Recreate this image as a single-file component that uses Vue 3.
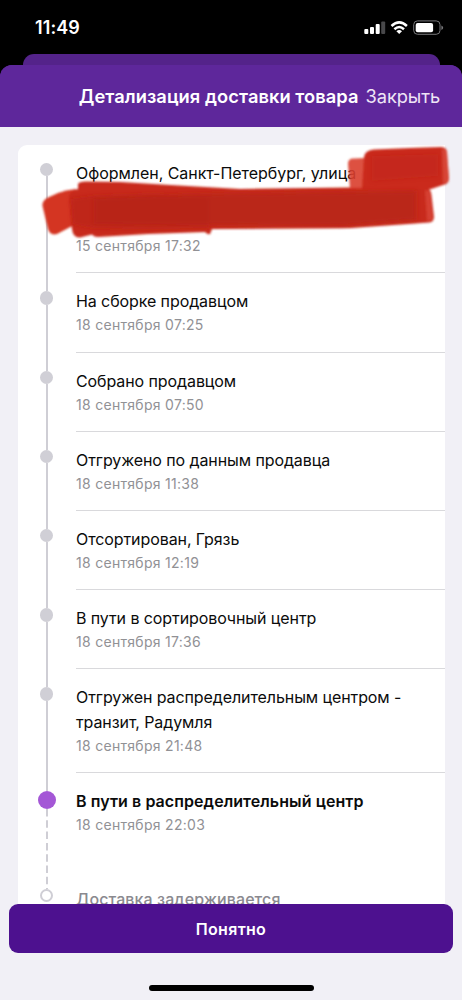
<script setup>
const steps = [
  { title: 'Оформлен, Санкт-Петербург, улица', date: '15 сентября 17:32', kind: 'address' },
  { title: 'На сборке продавцом', date: '18 сентября 07:25' },
  { title: 'Собрано продавцом', date: '18 сентября 07:50' },
  { title: 'Отгружено по данным продавца', date: '18 сентября 11:38' },
  { title: 'Отсортирован, Грязь', date: '18 сентября 12:19' },
  { title: 'В пути в сортировочный центр', date: '18 сентября 17:36' },
  { title: 'Отгружен распределительным центром - транзит, Радумля', date: '18 сентября 21:48' },
  { title: 'В пути в распределительный центр', date: '18 сентября 22:03', kind: 'current' },
  { title: 'Доставка задерживается', date: '', kind: 'next' },
]
</script>

<template>
  <div class="screen">
    <div class="status">
      <span class="time">11:49</span>
      <svg class="status-icons" width="82" height="18" viewBox="0 0 82 18">
        <g fill="#fff">
          <rect x="0.3" y="11" width="4" height="5" rx="1" />
          <rect x="6" y="9" width="4" height="7" rx="1" />
          <rect x="11.7" y="6" width="4" height="10" rx="1" />
          <rect x="17.2" y="3.4" width="4" height="12.6" rx="1" fill="#48484a" />
        </g>
        <g fill="none" stroke="#fff" stroke-width="2.5">
          <path d="M27.500 8Q35.200 0.800 42.900 8" />
          <path d="M30.400 11.200Q35.200 6.900 40 11.200" />
        </g>
        <path d="M32.400 13.200Q35.200 10.900 38 13.200L35.200 16Z" fill="#fff" />
        <rect x="49.700" y="2.900" width="26.300" height="13.400" rx="3.800" fill="none" stroke="#77777a" stroke-width="1" />
        <rect x="51.700" y="4.900" width="17.400" height="9.400" rx="2" fill="#fff" />
        <path d="M77.400 7.500Q79.200 8.200 79.200 9.700Q79.200 11.200 77.400 11.900Z" fill="#77777a" />
      </svg>
    </div>
    <div class="back-sheet"></div>
    <div class="sheet">
      <header class="head">
        <h1>Детализация доставки товара</h1>
        <span class="close">Закрыть</span>
      </header>
      <main class="body">
        <section class="card">
          <div v-for="(s, i) in steps" :key="i" class="step" :class="s.kind">
            <div class="rail">
              <span class="line before"></span>
              <span class="dot"></span>
              <svg v-if="s.kind === 'current'" class="dash" width="2" height="80" viewBox="0 0 2 80">
                <path d="M1 0V80" stroke="#cfced5" stroke-width="2" stroke-dasharray="7.5 3.8" />
              </svg>
              <span v-else class="line after"></span>
            </div>
            <div class="info">
              <div class="title">{{ s.title }}</div>
              <div class="date">{{ s.date }}</div>
            </div>
          </div>
          <svg class="marker" width="462" height="110" viewBox="0 140 462 110">
            <defs>
              <filter id="soft" x="-5%" y="-10%" width="110%" height="120%">
                <feGaussianBlur stdDeviation="0.8" />
              </filter>
              <filter id="softer" x="-5%" y="-20%" width="110%" height="140%">
                <feGaussianBlur stdDeviation="2" />
              </filter>
            </defs>
            <g filter="url(#soft)">
              <path d="M42.500 206Q42 201 47 198L58 193Q66 190 76 189V224L57 234Q50 236 48 229Z" fill="#d43523" />
              <path d="M69 197Q69 191 78 189V184Q79 181.500 86 181.500L120 182L170 185L240 189L350 187.500L427 188Q431 189 431.500 195L434 217Q434 222 429 222.500L350 228L212 229L210 234Q208 235 205 232L148 234L98 237Q94 237 92 234.500L80 237.500Q73 238 72 229Z" fill="#c8291b" />
              <path d="M425 190L430 191L433 220L427 221Z" fill="#df4f3f" opacity=".6" />
              <path d="M348 164Q348 158 354 158.500L366 158V189H350Z" fill="#d93d2b" opacity=".9" />
              <path d="M364 157Q365 150 374 149.500L410 148L441 147Q447 147 447 153L449 178Q449 184 443 185L431 189H362Z" fill="#ca2b1d" />
              <path d="M442 149L447 150L449 181L443 184Z" fill="#df5748" opacity=".6" />
            </g>
            <g filter="url(#softer)" fill="#b62417">
              <path d="M71 199L92 196L150 194L209 197V228L150 229L94 228L73 224Z" opacity=".5" />
              <path d="M94 198L200 194L416 191V220L340 226L94 224Z" opacity=".8" />
              <path d="M372 156L438 154V176L372 181Z" opacity=".25" />
            </g>
          </svg>
        </section>
      </main>
      <footer class="foot">
        <button class="ok">Понятно</button>
        <div class="home"></div>
      </footer>
    </div>
  </div>
</template>

<style>
html, body { margin: 0; background: #000; }
</style>

<style scoped>
.screen {
  width: 462px;
  height: 1000px;
  overflow: hidden;
  background: #000;
  display: flex;
  flex-direction: column;
  font-family: Inter, "Liberation Sans", sans-serif;
}
.status {
  height: 54px;
  flex: none;
  box-sizing: border-box;
  padding: 17px 16px 0 35px;
  display: flex;
  justify-content: space-between;
  align-items: flex-start;
}
.time { color: #fff; font-size: 18px; line-height: 22px; font-weight: 600; letter-spacing: 0.1px; }
.status-icons { margin: 1px 0 0; }
.back-sheet { height: 11px; flex: none; margin: 0 22.500px; background: #54238a; border-radius: 11px 11px 0 0; }
.sheet {
  flex: 1;
  min-height: 0;
  display: flex;
  flex-direction: column;
  border-radius: 12px 12px 0 0;
  overflow: hidden;
  background: linear-gradient(#5e279b 70px, #f1f0f6 70px);
}
.head {
  height: 62px;
  flex: none;
  display: flex;
  align-items: center;
  justify-content: flex-end;
  gap: 7px;
  box-sizing: border-box;
  padding: 0 22px 0 0;
  background: #5e279b;
  color: #fff;
  white-space: nowrap;
}
h1 { margin: 0; font-size: 18.300px; font-weight: 600; line-height: 24px; letter-spacing: 0.060px; }
.close { font-size: 18.300px; line-height: 24px; font-weight: 400; color: #eee5f6; letter-spacing: -0.100px; }
.body { flex: 1; min-height: 0; padding: 17.800px 17.500px 0; overflow: hidden; background: #f1f0f6; }
.card { position: relative; background: #fff; border-radius: 9px 0 0 0; height: 100%; }
.step { display: flex; height: 79.200px; }
.step:nth-child(1) { height: 128.600px; }
.step:nth-child(7) { height: 103.900px; }
.step.current { height: 97.300px; }
.rail { width: 58.500px; flex: none; display: flex; flex-direction: column; align-items: center; }
.line { width: 2px; background: #cfced5; }
.before { height: 18px; flex: none; }
.after { flex: 1; }
.dot { width: 13.400px; height: 13.400px; border-radius: 50%; background: #d0cfd6; flex: none; }
.address .before { background: none; }
.current .before { height: 17.600px; }
.current .dot { width: 18px; height: 18px; background: #a457d6; }
.dash { flex: none; display: block; }
.next .dot { box-sizing: border-box; border: 2px solid #cfced5; background: #fff; }
.next .line { background: none; }
.info { flex: 1; box-sizing: border-box; padding-top: 16px; border-bottom: 1px solid #d9d9dc; }
.current .info, .next .info { border-bottom: 0; }
.title { font-size: 16px; line-height: 24.600px; color: #0b0b0b; max-width: 350px; letter-spacing: -0.090px; }
.address .title { height: 73.800px; letter-spacing: -0.040px; }
.current .title { font-weight: 600; white-space: nowrap; letter-spacing: 0.070px; }
.next .title { font-weight: 500; color: #8a898f; letter-spacing: 0.080px; }
.date { font-size: 14px; line-height: 20px; margin-top: 1.400px; color: #919195; letter-spacing: 0.290px; }
.marker { position: absolute; left: -17.500px; top: -4.800px; pointer-events: none; }
.foot { height: 96px; flex: none; background: #f1f0f6; display: flex; flex-direction: column; align-items: center; }
.ok {
  width: 444px;
  height: 49px;
  padding: 0;
  border: 0;
  border-radius: 9px;
  background: #4d118f;
  color: #fff;
  font: 600 16px/50px Inter, "Liberation Sans", sans-serif;
  letter-spacing: 0.300px;
  flex: none;
}
.home { width: 165px; height: 6px; margin-top: 32px; border-radius: 3px; background: #000; }
</style>
